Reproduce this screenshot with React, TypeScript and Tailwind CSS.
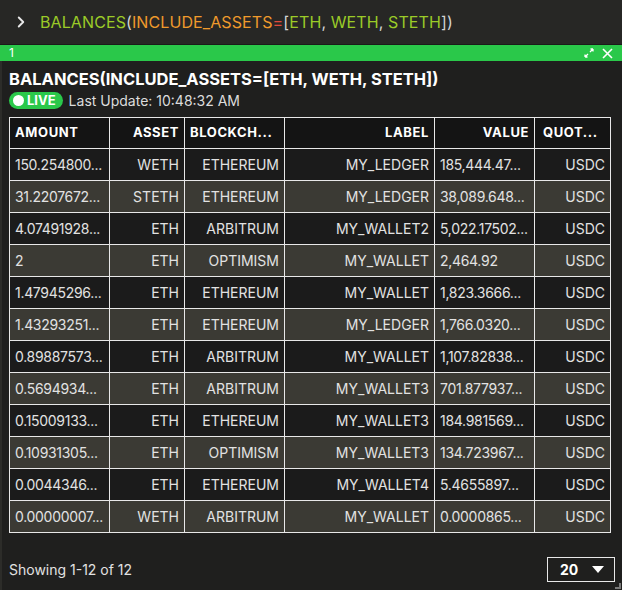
import { ChevronRight } from "lucide-react";

type Row = {
  amount: string;
  asset: string;
  chain: string;
  label: string;
  value: string;
};

// values as the grid shows them, already clipped to the column width
const rows: Row[] = [
  { amount: "150.254800...", asset: "WETH", chain: "ETHEREUM", label: "MY_LEDGER", value: "185,444.47..." },
  { amount: "31.2207672...", asset: "STETH", chain: "ETHEREUM", label: "MY_LEDGER", value: "38,089.648..." },
  { amount: "4.07491928...", asset: "ETH", chain: "ARBITRUM", label: "MY_WALLET2", value: "5,022.17502..." },
  { amount: "2", asset: "ETH", chain: "OPTIMISM", label: "MY_WALLET", value: "2,464.92" },
  { amount: "1.47945296...", asset: "ETH", chain: "ETHEREUM", label: "MY_WALLET", value: "1,823.3666..." },
  { amount: "1.43293251...", asset: "ETH", chain: "ETHEREUM", label: "MY_LEDGER", value: "1,766.0320..." },
  { amount: "0.89887573...", asset: "ETH", chain: "ARBITRUM", label: "MY_WALLET", value: "1,107.82838..." },
  { amount: "0.5694934...", asset: "ETH", chain: "ARBITRUM", label: "MY_WALLET3", value: "701.877937..." },
  { amount: "0.15009133...", asset: "ETH", chain: "ETHEREUM", label: "MY_WALLET3", value: "184.981569..." },
  { amount: "0.10931305...", asset: "ETH", chain: "OPTIMISM", label: "MY_WALLET3", value: "134.723967..." },
  { amount: "0.0044346...", asset: "ETH", chain: "ETHEREUM", label: "MY_WALLET4", value: "5.4655897..." },
  { amount: "0.00000007...", asset: "WETH", chain: "ARBITRUM", label: "MY_WALLET", value: "0.0000865..." },
];

const font = { fontFamily: "Inter, 'Noto Sans', sans-serif" };

function Query() {
  return (
    <span className="text-[16px] tracking-[0.1px]">
      <span className="text-[#9bcb28]">BALANCES</span>
      <span className="text-[#d4d4d4]">(</span>
      <span className="text-[#f09a2c]">INCLUDE_ASSETS</span>
      <span className="text-[#e04a3c]">=</span>
      <span className="text-[#d4d4d4]">[</span>
      <span className="text-[#9bcb28]">ETH</span>
      <span className="text-[#d4d4d4]">, </span>
      <span className="text-[#9bcb28]">WETH</span>
      <span className="text-[#d4d4d4]">, </span>
      <span className="text-[#9bcb28]">STETH</span>
      <span className="text-[#d4d4d4]">])</span>
    </span>
  );
}

const cell = "border border-[#e8e8e8] px-[5px] whitespace-nowrap overflow-hidden";

export default function App() {
  return (
    <div className="relative w-[622px] h-[590px] flex flex-col bg-[#1f1f1e] text-[#e6e6e6]" style={font}>
      {/* Query input bar */}
      <div className="h-[45px] flex items-center bg-[#272725] pl-[12px] border-b border-[#1a1a19]">
        <ChevronRight size={18} strokeWidth={2.5} className="text-[#e8e8e8]" />
        <div className="ml-[10px]">
          <Query />
        </div>
      </div>

      {/* Panel header */}
      <div className="h-[16px] flex items-center justify-between bg-[#2ac84a] px-[9px] text-white">
        <span className="text-[12px] leading-none">1</span>
        <div className="flex items-center gap-[8px]">
          <svg width="10" height="10" viewBox="0 0 10 10" fill="none" stroke="white" strokeWidth="1.3">
            <path d="M1 9 L4 6 M1 9 L1 6.5 M1 9 L3.5 9" />
            <path d="M9 1 L6 4 M9 1 L6.5 1 M9 1 L9 3.5" />
          </svg>
          <svg width="11" height="11" viewBox="0 0 11 11" stroke="white" strokeWidth="1.6">
            <path d="M1 1 L10 10 M10 1 L1 10" />
          </svg>
        </div>
      </div>

      {/* Panel body */}
      <div className="flex-1 flex flex-col border-l-2 border-[#2c2c29] pl-[7px] pr-[12px]">
        <div className="mt-[8px] text-[16.5px] font-bold text-white leading-[20px]">
          BALANCES(INCLUDE_ASSETS=[ETH, WETH, STETH])
        </div>
        <div className="mt-[1px] flex items-center gap-[6px]">
          <span className="flex items-center gap-[3px] h-[17px] rounded-full bg-[#2ac84a] pl-[4px] pr-[7px] text-white text-[13px] font-bold">
            <span className="w-[11px] h-[11px] rounded-full bg-white" />
            LIVE
          </span>
          <span className="text-[14px] text-[#dcdcdc]">Last Update: 10:48:32 AM</span>
        </div>

        <table className="mt-[6px] w-[601px] table-fixed border-collapse text-[14px]">
          <colgroup>
            <col className="w-[100px]" />
            <col className="w-[75px]" />
            <col className="w-[100px]" />
            <col className="w-[150px]" />
            <col className="w-[100px]" />
            <col className="w-[76px]" />
          </colgroup>
          <thead>
            <tr className="h-[31px] bg-[#141414] text-white text-[13px] font-bold tracking-[0.6px]">
              <th className={`${cell} text-left`}>AMOUNT</th>
              <th className={`${cell} text-right`}>ASSET</th>
              <th className={`${cell} text-left`}>BLOCKCH...</th>
              <th className={`${cell} text-right`}>LABEL</th>
              <th className={`${cell} text-right`}>VALUE</th>
              <th className={`${cell} text-left !pl-[8px]`}>QUOT...</th>
            </tr>
          </thead>
          <tbody>
            {rows.map((r, i) => (
              <tr
                key={i}
                className={`h-[32px] text-[#e2e2e2] ${i % 2 === 1 ? "bg-[#3b3a34]" : "bg-[#1b1b1b]"}`}
              >
                <td className={`${cell} text-left tracking-[-0.3px]`}>{r.amount}</td>
                <td className={`${cell} text-right`}>{r.asset}</td>
                <td className={`${cell} text-right`}>{r.chain}</td>
                <td className={`${cell} text-right`}>{r.label}</td>
                <td className={`${cell} text-left tracking-[-0.3px]`}>{r.value}</td>
                <td className={`${cell} text-right`}>USDC</td>
              </tr>
            ))}
          </tbody>
        </table>

        <div className="mt-[24px] h-[25px] flex items-center justify-between">
          <span className="text-[14px] text-[#e2e2e2]">Showing 1-12 of 12</span>
          <div className="w-[68px] h-[25px] mr-[-5px] border border-[#e8e8e8] flex items-center justify-between pl-[12px] pr-[10px]">
            <span className="text-[14px] font-bold text-white">20</span>
            <svg width="12" height="7" viewBox="0 0 12 7">
              <path d="M0 0 L12 0 L6 7 Z" fill="white" />
            </svg>
          </div>
        </div>
      </div>

      {/* Resize handle */}
      <svg className="absolute right-[1px] bottom-[1px]" width="6" height="6" viewBox="0 0 6 6">
        <path d="M5 0 V5 H0" fill="none" stroke="#7a7a7a" strokeWidth="2" />
      </svg>
    </div>
  );
}
